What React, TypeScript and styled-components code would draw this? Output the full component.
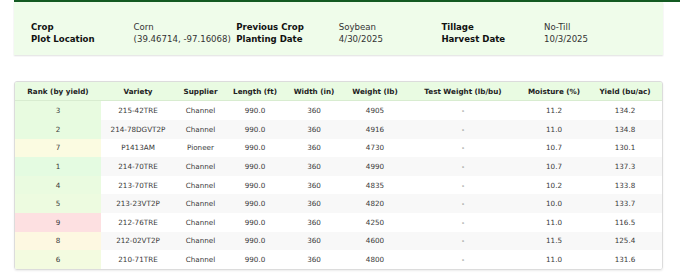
import React from "react";
import styled, { createGlobalStyle } from "styled-components";

const GlobalStyle = createGlobalStyle`
  html, body { margin: 0; padding: 0; background: #ffffff; }
  body { font-family: "DejaVu Sans", Verdana, sans-serif; }
`;

const Page = styled.div`
  width: 680px;
  height: 280px;
  overflow: hidden;
  background: #ffffff;
`;

const TopBar = styled.div`
  height: 2px;
  margin-left: 14px;
  background: #135a22;
`;

const Content = styled.div`
  padding: 0 17px 0 14px;
  display: flex;
  flex-direction: column;
  gap: 26px;
`;

const InfoCard = styled.div`
  background: #effcea;
  padding: 18.5px 17px 9.5px;
  box-shadow: 0 1px 1.5px rgba(0, 0, 0, 0.12);
  display: grid;
  grid-template-columns: repeat(6, 102.6px);
  row-gap: 0;
  font-size: 8.6px;
  line-height: 12.6px;
`;

const Label = styled.div`
  font-weight: bold;
  color: #111;
  white-space: nowrap;
`;

const Value = styled.div`
  color: #333;
  white-space: nowrap;
`;

const TableCard = styled.div`
  border: 1px solid #dcdcdc;
  border-radius: 3px;
  box-shadow: 0 1px 2px rgba(0, 0, 0, 0.08);
  overflow: hidden;
`;

const Table = styled.table`
  width: 100%;
  border-collapse: collapse;
  table-layout: fixed;
  font-size: 7.2px;
`;

const HeadCell = styled.th`
  background: #e9fbe2;
  color: #222;
  font-weight: bold;
  height: 18.2px;
  padding: 0;
  text-align: center;
  white-space: nowrap;
  border-bottom: 1px solid #d8ecd0;
`;

const Row = styled.tr<{ $striped: boolean }>`
  background: ${(p) => (p.$striped ? "#f8f8f8" : "#ffffff")};
`;

const Cell = styled.td`
  height: 18.6px;
  padding: 0;
  text-align: center;
  color: #3a3a3a;
  white-space: nowrap;
`;

const RankCell = styled(Cell)<{ $bg: string }>`
  background: ${(p) => p.$bg};
`;

const Divider = styled.div`
  margin-top: 10px;
  height: 1px;
  background: #e2e2e2;
`;

const rankColors: Record<number, string> = {
  1: "#e4fbe1",
  2: "#e7fbe0",
  3: "#e8fbe0",
  4: "#eafbe0",
  5: "#edfbe0",
  6: "#f3fbe0",
  7: "#fbfbe1",
  8: "#fdf8e1",
  9: "#fde0e1",
};

const colWidths = [86, 74, 51, 58, 60, 62, 114, 68, 74];

const headers = [
  "Rank (by yield)",
  "Variety",
  "Supplier",
  "Length (ft)",
  "Width (in)",
  "Weight (lb)",
  "Test Weight (lb/bu)",
  "Moisture (%)",
  "Yield (bu/ac)",
];

type Entry = {
  rank: number;
  variety: string;
  supplier: string;
  weight: number;
  moisture: string;
  yieldVal: string;
};

const rows: Entry[] = [
  { rank: 3, variety: "215-42TRE", supplier: "Channel", weight: 4905, moisture: "11.2", yieldVal: "134.2" },
  { rank: 2, variety: "214-78DGVT2P", supplier: "Channel", weight: 4916, moisture: "11.0", yieldVal: "134.8" },
  { rank: 7, variety: "P1413AM", supplier: "Pioneer", weight: 4730, moisture: "10.7", yieldVal: "130.1" },
  { rank: 1, variety: "214-70TRE", supplier: "Channel", weight: 4990, moisture: "10.7", yieldVal: "137.3" },
  { rank: 4, variety: "213-70TRE", supplier: "Channel", weight: 4835, moisture: "10.2", yieldVal: "133.8" },
  { rank: 5, variety: "213-23VT2P", supplier: "Channel", weight: 4820, moisture: "10.0", yieldVal: "133.7" },
  { rank: 9, variety: "212-76TRE", supplier: "Channel", weight: 4250, moisture: "11.0", yieldVal: "116.5" },
  { rank: 8, variety: "212-02VT2P", supplier: "Channel", weight: 4600, moisture: "11.5", yieldVal: "125.4" },
  { rank: 6, variety: "210-71TRE", supplier: "Channel", weight: 4800, moisture: "11.0", yieldVal: "131.6" },
];

const info: [string, string][] = [
  ["Crop", "Corn"],
  ["Previous Crop", "Soybean"],
  ["Tillage", "No-Till"],
  ["Plot Location", "(39.46714, -97.16068)"],
  ["Planting Date", "4/30/2025"],
  ["Harvest Date", "10/3/2025"],
];

export default function App() {
  return (
    <Page>
      <GlobalStyle />
      <TopBar />
      <Content>
        <InfoCard>
          {info.map(([l, v]) => (
            <React.Fragment key={l}>
              <Label>{l}</Label>
              <Value>{v}</Value>
            </React.Fragment>
          ))}
        </InfoCard>
        <TableCard>
          <Table>
            <colgroup>
              {colWidths.map((w, i) => (
                <col key={i} style={{ width: w }} />
              ))}
            </colgroup>
            <thead>
              <tr>
                {headers.map((h) => (
                  <HeadCell key={h}>{h}</HeadCell>
                ))}
              </tr>
            </thead>
            <tbody>
              {rows.map((r, i) => (
                <Row key={r.variety} $striped={i % 2 === 1}>
                  <RankCell $bg={rankColors[r.rank]}>{r.rank}</RankCell>
                  <Cell>{r.variety}</Cell>
                  <Cell>{r.supplier}</Cell>
                  <Cell>990.0</Cell>
                  <Cell>360</Cell>
                  <Cell>{r.weight}</Cell>
                  <Cell>-</Cell>
                  <Cell>{r.moisture}</Cell>
                  <Cell>{r.yieldVal}</Cell>
                </Row>
              ))}
            </tbody>
          </Table>
        </TableCard>
      </Content>
      <Divider />
    </Page>
  );
}
